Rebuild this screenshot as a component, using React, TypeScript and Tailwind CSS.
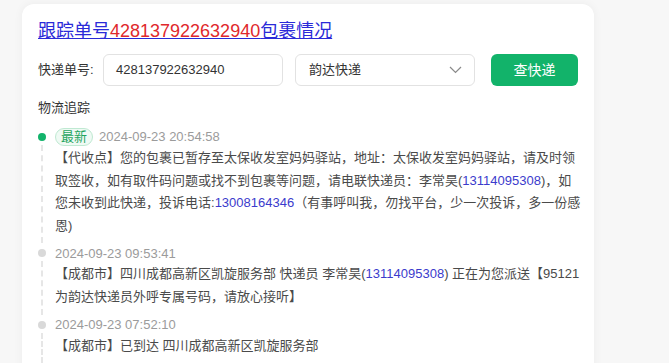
import React from 'react';

type Seg = { t: string; phone?: boolean };

const traces: { time: string; latest?: boolean; body: Seg[] }[] = [
  {
    time: '2024-09-23 20:54:58',
    latest: true,
    body: [
      { t: '【代收点】您的包裹已暂存至太保收发室妈妈驿站，地址：太保收发室妈妈驿站，请及时领取签收，如有取件码问题或找不到包裹等问题，请电联快递员：李常昊(' },
      { t: '13114095308', phone: true },
      { t: ')，如您未收到此快递，投诉电话:' },
      { t: '13008164346', phone: true },
      { t: '（有事呼叫我，勿找平台，少一次投诉，多一份感恩)' },
    ],
  },
  {
    time: '2024-09-23 09:53:41',
    body: [
      { t: '【成都市】四川成都高新区凯旋服务部 快递员 李常昊(' },
      { t: '13114095308', phone: true },
      { t: ') 正在为您派送【95121为韵达快递员外呼专属号码，请放心接听】' },
    ],
  },
  {
    time: '2024-09-23 07:52:10',
    body: [{ t: '【成都市】已到达 四川成都高新区凯旋服务部' }],
  },
];

// 物流轨迹的一条
const TraceItem = ({ item }: { item: (typeof traces)[number] }) => (
  <div className="flex">
    <div className="w-[8px] shrink-0 flex flex-col items-center pt-[6px]">
      <span className={`w-[8px] h-[8px] rounded-full shrink-0 ${item.latest ? 'bg-[#13b36b]' : 'bg-[#d9d9d9]'}`} />
      <span className="flex-1 mt-[4px] border-l-2 border-dashed border-[#e6e6e6]" />
    </div>
    <div className="ml-[9px] w-[527px] shrink-0 pb-[6px]">
      <div className="h-[20px] flex items-center">
        {item.latest && (
          <span className="h-[18px] px-[5px] mr-[6px] flex items-center rounded-full border border-[#bfe9d2] bg-[#effaf4] text-[13px] text-[#1fa55f]">
            最新
          </span>
        )}
        <span className="text-[13px] text-[#9b9b9b]">{item.time}</span>
      </div>
      <p className="text-[13px] leading-[22.6px] text-[#4a4a4a]">
        {item.body.map((s, i) =>
          s.phone ? (
            <span key={i} className="text-[#3b3bcc]">{s.t}</span>
          ) : (
            <span key={i}>{s.t}</span>
          )
        )}
      </p>
    </div>
  </div>
);

export default function App() {
  return (
    <div className="h-[363px] overflow-hidden bg-[#f7f7f7] pt-1 pl-[22px] font-['Liberation_Sans','Noto_Sans_CJK_SC',sans-serif]">
      <div className="w-[572px] min-h-[400px] bg-white rounded-xl shadow-[0_0_10px_rgba(0,0,0,0.05)] pt-[15px] pl-4 pr-3">
        {/* 标题 */}
        <a href="#" className="text-[18px] leading-[24px] underline text-[#2a2ad8]">
          跟踪单号<span className="text-[#e0282c]">428137922632940</span>包裹情况
        </a>

        {/* 查询栏 */}
        <div className="mt-[10px] flex items-center h-8">
          <span className="w-[65px] text-[13px] text-[#333]">快递单号:</span>
          <div className="w-[180px] h-8 flex items-center px-[12px] border border-[#e2e2e2] rounded-md text-[13px] text-[#333]">
            428137922632940
          </div>
          <div className="ml-3 w-[180px] h-8 flex items-center justify-between pl-[13px] pr-[12px] border border-[#e2e2e2] rounded-md text-[13px] text-[#333]">
            韵达快递
            <svg width="13" height="8" viewBox="0 0 13 8" fill="none">
              <path d="M1 1l5.5 5.5L12 1" stroke="#8a8a8a" strokeWidth="1.2" />
            </svg>
          </div>
          <button className="ml-4 w-[87px] h-8 rounded-md bg-[#12b36a] text-white text-[14px]">查快递</button>
        </div>

        <div className="mt-[12px] text-[13px] leading-[20px] text-[#333]">物流追踪</div>

        <div className="mt-[9px]">
          {traces.map((t) => (
            <TraceItem key={t.time} item={t} />
          ))}
        </div>
      </div>
    </div>
  );
}
